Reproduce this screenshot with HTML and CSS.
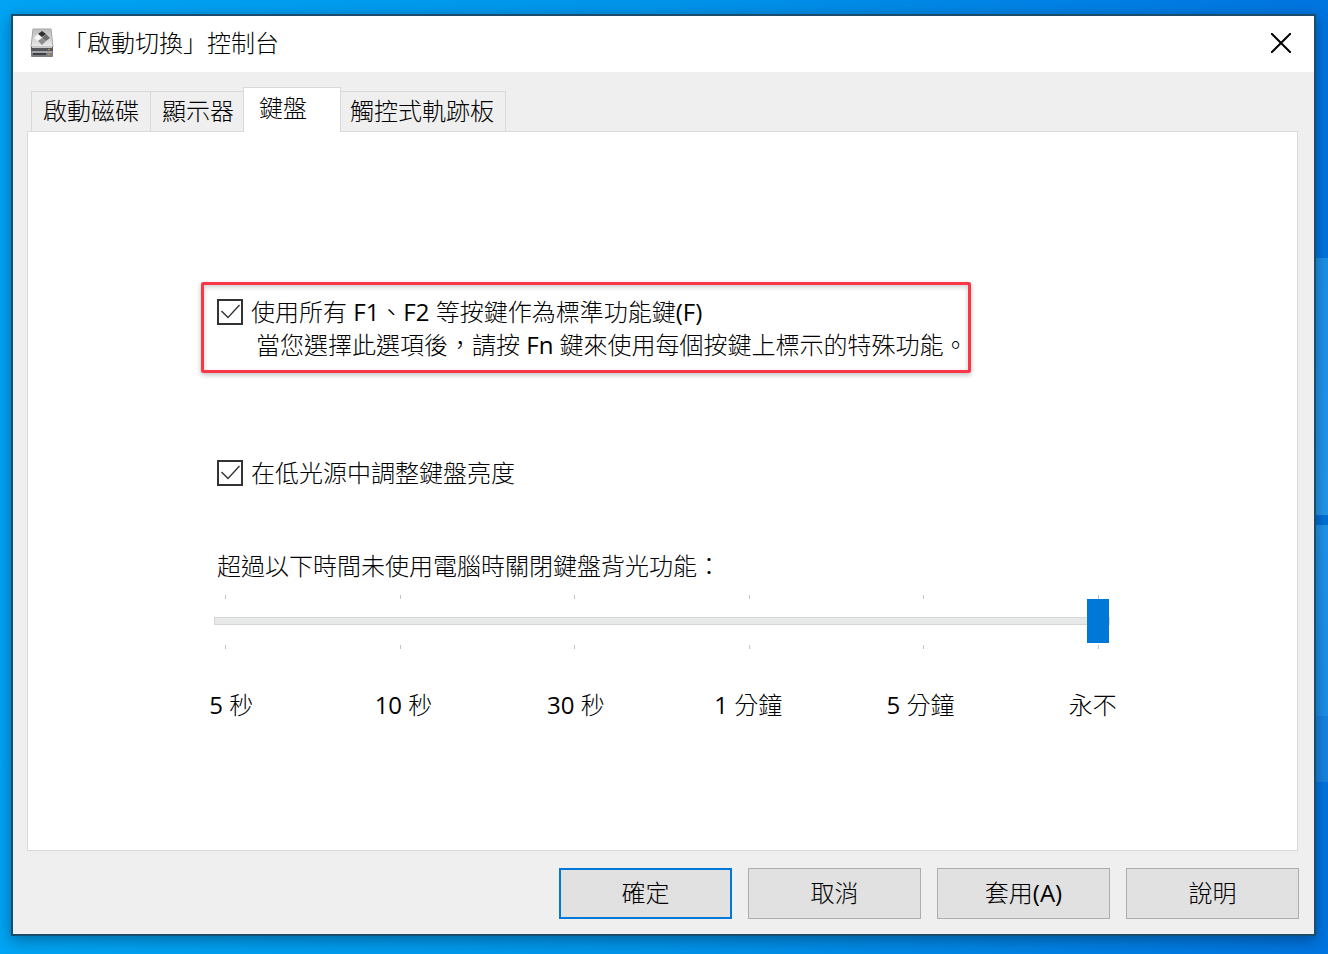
FILE: index.html
```html
<!DOCTYPE html>
<html lang="zh-Hant">
<head>
  <meta charset="utf-8">
  <title>「啟動切換」控制台</title>
  <link rel="stylesheet" href="styles.css">
</head>
<body>
  <div class="window">
    <header class="titlebar">
      <svg class="app-icon" width="24" height="30" viewBox="0 0 24 30">
        <defs>
          <linearGradient id="lid" x1="0" y1="0" x2="0" y2="1">
            <stop offset="0" stop-color="#bdbdbd"/>
            <stop offset="1" stop-color="#e9e9e9"/>
          </linearGradient>
        </defs>
        <path d="M3 1h18l2 18H1z" fill="url(#lid)" stroke="#a5a5a5"/>
        <path d="M1 19h22v4H1z" fill="#55575a"/>
        <path d="M1 23h22v5q0 1-1 1H2q-1 0-1-1z" fill="#7c7e81"/>
        <path d="M2 19.500h20M2 24h20" stroke="#c9cbcd"/>
        <path d="M3 26h13" stroke="#3d3f42" stroke-width="2"/>
        <path d="M18 21.500h2M18 26.500h2" stroke="#c79a45"/>
        <path d="M12 3l4 3-4 3-4-3z" fill="#303030"/>
        <path d="M8 6l4 4-4 3-4-3z" fill="#f8f8f8"/>
        <path d="M16 6l4 4-4 3-4-3z" fill="#6d6d6d"/>
        <path d="M12 10l4 3-4 4-4-4z" fill="#8d8d8d"/>
      </svg>
      <h1>「啟動切換」控制台</h1>
      <button class="close" type="button" aria-label="關閉">
        <svg width="20" height="20" viewBox="0 0 20 20">
          <path d="M0 0l20 20M20 0L0 20" stroke="#000" stroke-width="2" fill="none"/>
        </svg>
      </button>
    </header>

    <div class="tabs" role="tablist">
      <button class="tab" type="button" role="tab">啟動磁碟</button>
      <button class="tab" type="button" role="tab">顯示器</button>
      <button class="tab active" type="button" role="tab" aria-selected="true">鍵盤</button>
      <button class="tab" type="button" role="tab">觸控式軌跡板</button>
    </div>

    <main class="panel">
      <div class="highlight">
        <div class="option">
          <input type="checkbox" id="fkeys" checked>
          <label for="fkeys">使用所有 <span class="latin">F1</span>、<span class="latin">F2</span> 等按鍵作為標準功能鍵<span class="latin">(F)</span></label>
        </div>
        <p class="hint">當您選擇此選項後，請按 <span class="latin">Fn</span> 鍵來使用每個按鍵上標示的特殊功能。</p>
      </div>

      <div class="option light">
        <input type="checkbox" id="lowlight" checked>
        <label for="lowlight">在低光源中調整鍵盤亮度</label>
      </div>

      <label class="slider-label" for="timeout">超過以下時間未使用電腦時關閉鍵盤背光功能：</label>
      <div class="slider">
        <div class="ticks"><i></i><i></i><i></i><i></i><i></i><i></i></div>
        <input type="range" id="timeout" min="0" max="5" value="5">
        <div class="ticks"><i></i><i></i><i></i><i></i><i></i><i></i></div>
      </div>
      <div class="times">
        <span><span class="latin">5</span> 秒</span>
        <span><span class="latin">10</span> 秒</span>
        <span><span class="latin">30</span> 秒</span>
        <span><span class="latin">1</span> 分鐘</span>
        <span><span class="latin">5</span> 分鐘</span>
        <span>永不</span>
      </div>
    </main>

    <footer class="buttons">
      <button class="btn default" type="button">確定</button>
      <button class="btn" type="button">取消</button>
      <button class="btn" type="button">套用<span class="latin">(A)</span></button>
      <button class="btn" type="button">說明</button>
    </footer>
  </div>
</body>
</html>
```

FILE: styles.css
```css
* {
  box-sizing: border-box;
}

body {
  display: flex;
  min-height: 100vh;
  margin: 0;
  padding: 14px 12px 18px 11px;
  color: #000;
  font-family: "Noto Sans", "Noto Sans CJK TC", sans-serif;
  font-size: 24px;
  font-weight: 300;
  line-height: 33px;
  /* wallpaper: window panes of light on the right edge */
  background:
    linear-gradient(transparent 27%, #1c90ea 27%, #2496ec 54%, #0070d8 54%, #0070d8 55%, #2093ea 55%, #1c8ee8 75%, #1683e2 75%, #1683e2 82%, transparent 82%) right / 14px 100% no-repeat,
    linear-gradient(90deg, #00a4f4, #0094ea 50%, #0074e0);
}

button {
  padding: 0;
  border: 0;
  color: inherit;
  font: inherit;
}

.latin {
  font-family: "Open Sans", sans-serif;
  font-weight: 400;
}

.window {
  display: flex;
  flex: 1;
  flex-direction: column;
  border: 2px solid #1b4c6c;
  background: #efefef;
  box-shadow: 0 4px 14px rgba(0, 0, 0, 0.35);
}

.titlebar {
  display: flex;
  align-items: center;
  height: 56px;
  padding: 0 23px 2px 17px;
  background: #fff;
}

.titlebar h1 {
  flex: 1;
  margin: 0 0 0 9px;
  padding-bottom: 2px;
  font-size: 24px;
  font-weight: 300;
}

.close {
  display: flex;
  background: none;
}

.tabs {
  display: flex;
  align-items: flex-end;
  margin: 15px 0 0 18px;
}

.tab {
  height: 40px;
  margin-left: -1px;
  padding: 0 11px 2px;
  border: 1px solid #d9d9d9;
  border-bottom: 0;
  background: #efefef;
  text-align: left;
}

.tab:first-child {
  margin-left: 0;
}

.tab.active {
  position: relative;
  z-index: 1;
  min-width: 98px;
  height: 45px;
  margin: 0 -2px -1px -3px;
  padding: 0 15px 6px;
  background: #fff;
}

.panel {
  flex: 1;
  margin: 0 16px 0 14px;
  padding: 150px 174px 0 173px;
  border: 1px solid #d9d9d9;
  background: #fff;
}

.highlight {
  width: fit-content;
  padding: 10px 0 9px 13px;
  border: 3px solid #fb3747;
  border-radius: 2px;
  box-shadow: 0 2px 5px rgba(0, 0, 0, 0.25), inset 0 2px 5px rgba(0, 0, 0, 0.2);
  white-space: nowrap;
}

.option {
  display: flex;
  align-items: center;
  gap: 8px;
}

.option input {
  display: grid;
  appearance: none;
  width: 26px;
  height: 26px;
  margin: 0;
  border: 2px solid #333;
  background: #fff;
}

.option input:checked::before {
  content: "";
  background: #333;
  clip-path: polygon(2px 11px, 3px 10px, 9px 16px, 20px 4px, 21px 5px, 9px 18px);
}

.hint {
  margin: 0 0 0 39px;
}

.light {
  margin: 83px 0 0 16px;
}

.slider-label {
  display: block;
  margin: 60px 0 0 16px;
}

.slider {
  margin: 13px 13px 0 13px;
}

.slider input {
  display: block;
  appearance: none;
  width: 100%;
  height: 44px;
  margin: 0 0 2px;
  background: none;
}

.slider input::-webkit-slider-runnable-track {
  height: 8px;
  border: 1px solid #d6d6d6;
  background: #e7e8e8;
}

.slider input::-webkit-slider-thumb {
  appearance: none;
  width: 22px;
  height: 44px;
  margin-top: -19px;
  background: #0078d7;
}

.ticks {
  display: flex;
  justify-content: space-between;
  padding: 0 11px;
}

.ticks i {
  width: 1px;
  height: 4px;
  background: #c4c4c4;
}

.times {
  display: grid;
  grid-template-columns: repeat(6, 1fr);
  margin: 39px -56px 0;
  text-align: center;
}

.buttons {
  display: flex;
  justify-content: flex-end;
  gap: 16px;
  padding: 17px 15px 15px;
}

.btn {
  width: 173px;
  height: 51px;
  padding-bottom: 2px;
  border: 1px solid #adadad;
  background: #e1e1e1;
}

.btn.default {
  border: 2px solid #0078d7;
}
```
